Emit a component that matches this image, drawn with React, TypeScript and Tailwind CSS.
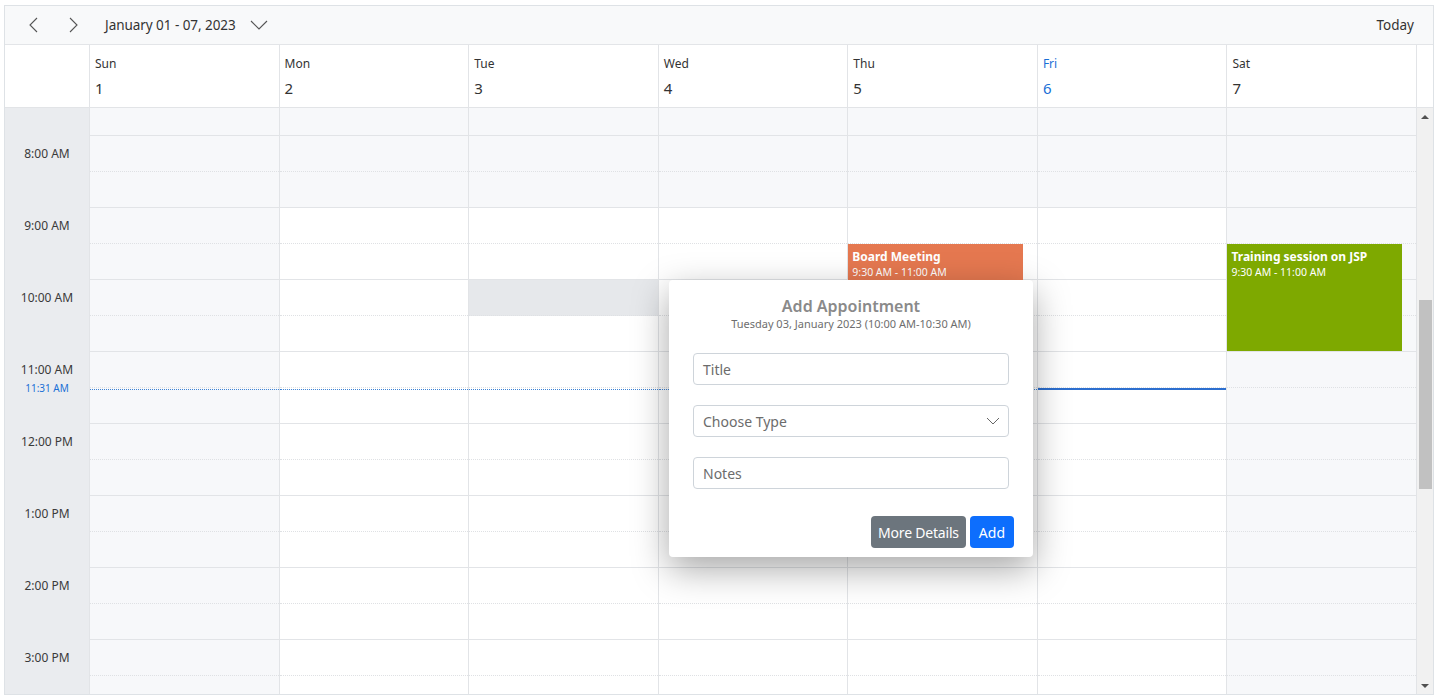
import React from "react";

const days = [
  { n: "Sun", d: "1" },
  { n: "Mon", d: "2" },
  { n: "Tue", d: "3" },
  { n: "Wed", d: "4" },
  { n: "Thu", d: "5" },
  { n: "Fri", d: "6", today: true },
  { n: "Sat", d: "7" },
];

const hours = [8, 9, 10, 11, 12, 13, 14, 15];
const label = (h: number) => {
  const ap = h >= 12 ? "PM" : "AM";
  const hh = h > 12 ? h - 12 : h;
  return `${hh}:00 ${ap}`;
};

function Slot({ day, hour, half, partial }: { day: number; hour: number; half: boolean; partial?: boolean }) {
  const working = day >= 1 && day <= 5 && hour >= 9 && hour < 18;
  const selected = day === 2 && hour === 10 && !half;
  const bg = selected ? "bg-[#e6e8eb]" : working ? "bg-white" : "bg-[#f7f8fa]";
  const border = half ? "border-b border-solid border-[#e2e4e7]" : "border-b border-dotted border-[#dfe1e4]";
  return <div className={`${partial ? "h-[28px]" : "h-[36px]"} shrink-0 ${bg} ${border}`} />;
}

function DayColumn({ day }: { day: number }) {
  return (
    <div className="relative flex-1 min-w-0 flex flex-col border-r border-[#e2e4e7]">
      <Slot day={day} hour={7} half partial />
      {hours.map((h) => (
        <React.Fragment key={h}>
          <Slot day={day} hour={h} half={false} />
          <Slot day={day} hour={h} half />
        </React.Fragment>
      ))}
      {day <= 4 && (
        <div className="absolute left-0 right-0 top-[281px] border-t border-dotted border-[#3b82d6]" />
      )}
      {day === 5 && <div className="absolute left-0 right-0 top-[280px] h-[2px] bg-[#2d6fcf]" />}
      {day === 4 && (
        <div className="absolute left-0 top-[136px] w-[175px] h-[107px] bg-[#e57850] px-[4px] pt-[5px] text-white">
          <div className="text-[12px] font-bold leading-[15px]">Board Meeting</div>
          <div className="text-[10.5px] leading-[15px] mt-[1px]">9:30 AM - 11:00 AM</div>
        </div>
      )}
      {day === 6 && (
        <div className="absolute left-0 top-[136px] w-[175px] h-[107px] bg-[#7ea900] px-[4px] pt-[5px] text-white">
          <div className="text-[12px] font-bold leading-[15px]">Training session on JSP</div>
          <div className="text-[10.5px] leading-[15px] mt-[1px]">9:30 AM - 11:00 AM</div>
        </div>
      )}
    </div>
  );
}

export default function App() {
  return (
    <div
      className="w-[1437px] h-[699px] bg-white pl-[4px] pt-[5px]"
      style={{ fontFamily: '"Segoe UI", "Noto Sans", "Open Sans", sans-serif' }}
    >
      <div className="relative w-[1430px] h-[690px] border border-[#dee2e6] flex flex-col overflow-hidden">
        {/* toolbar */}
        <div className="h-[39px] shrink-0 bg-[#f8f9fa] border-b border-[#e3e5e8] flex items-center text-[#333]">
          <div className="w-[19px]" />
          <svg width="20" height="20" viewBox="0 0 20 20" className="text-[#555]">
            <path d="M13 3 L6 10 L13 17" fill="none" stroke="currentColor" strokeWidth="1.1" />
          </svg>
          <div className="w-[19px]" />
          <svg width="20" height="20" viewBox="0 0 20 20" className="text-[#555]">
            <path d="M7 3 L14 10 L7 17" fill="none" stroke="currentColor" strokeWidth="1.1" />
          </svg>
          <span className="ml-[22px] text-[13.5px] text-[#333] tracking-[-0.05px]">January 01 - 07, 2023</span>
          <svg width="18" height="12" viewBox="0 0 18 12" className="ml-[14px] text-[#555]">
            <path d="M1 2 L9 10 L17 2" fill="none" stroke="currentColor" strokeWidth="1.1" />
          </svg>
          <div className="flex-1" />
          <span className="text-[13.5px] text-[#333] mr-[19px]">Today</span>
        </div>
        {/* header */}
        <div className="h-[63px] shrink-0 flex border-b border-[#e2e4e7] bg-white">
          <div className="w-[85px] shrink-0 border-r border-[#e2e4e7]" />
          <div className="flex-1 flex">
            {days.map((d) => (
              <div key={d.n} className="flex-1 min-w-0 border-r border-[#e2e4e7] pl-[5px] pt-[11px]">
                <div className={`text-[12px] leading-[16px] ${d.today ? "text-[#1a6fd6]" : "text-[#333]"}`}>{d.n}</div>
                <div className={`text-[15px] leading-[20px] mt-[6px] ${d.today ? "text-[#1a6fd6]" : "text-[#333]"}`}>{d.d}</div>
              </div>
            ))}
          </div>
          <div className="w-[16px] shrink-0" />
        </div>
        {/* body */}
        <div className="flex-1 flex min-h-0 overflow-hidden relative">
          <div className="relative w-[85px] shrink-0 bg-[#eaecef] border-r border-[#e2e4e7] flex flex-col">
            <div className="h-[28px] shrink-0" />
            {hours.map((h) => (
              <div key={h} className="h-[72px] shrink-0">
                <div className="h-[36px] flex items-center justify-center text-[12px] text-[#3a3a3a]">{label(h)}</div>
              </div>
            ))}
            <div className="absolute left-0 right-0 top-[274px] text-center text-[10px] leading-[12px] text-[#1a6fd6]">
              11:31 AM
            </div>
          </div>
          <div className="flex-1 flex min-w-0">
            {days.map((d, i) => (
              <DayColumn key={d.n} day={i} />
            ))}
          </div>
          {/* scrollbar */}
          <div className="w-[16px] shrink-0 bg-[#f1f1f1] flex flex-col items-center">
            <svg width="8" height="6" viewBox="0 0 8 6" className="mt-[6px]">
              <path d="M0 5 L4 1 L8 5 Z" fill="#505050" />
            </svg>
            <div className="mt-[180px] w-[13px] h-[189px] bg-[#c1c1c1]" />
            <div className="flex-1" />
            <svg width="8" height="6" viewBox="0 0 8 6" className="mb-[5px]">
              <path d="M0 1 L4 5 L8 1 Z" fill="#505050" />
            </svg>
          </div>

          {/* popup */}
          <div className="absolute left-[664px] top-[172px] w-[364px] h-[277px] bg-white rounded-[4px] shadow-[0_12px_36px_rgba(0,0,0,0.35)] flex flex-col">
            <div className="pt-[16px] text-center text-[16px] font-semibold leading-[20px] text-[#8a8a8a]">
              Add Appointment
            </div>
            <div className="text-center text-[11px] leading-[14px] text-[#6e6e6e] mt-[1px]">
              Tuesday 03, January 2023 (10:00 AM-10:30 AM)
            </div>
            <div className="px-[24px] mt-[22px] flex flex-col gap-[20px]">
              <div className="h-[32px] border border-[#ced4da] rounded-[4px] flex items-center pl-[9px] text-[14px] text-[#6c6c6c]">
                Title
              </div>
              <div className="h-[32px] border border-[#ced4da] rounded-[4px] flex items-center pl-[9px] pr-[8px] text-[14px] text-[#6c6c6c]">
                <span className="flex-1">Choose Type</span>
                <svg width="14" height="8" viewBox="0 0 14 8">
                  <path d="M1 1 L7 7 L13 1" fill="none" stroke="#666" strokeWidth="1" />
                </svg>
              </div>
              <div className="h-[32px] border border-[#ced4da] rounded-[4px] flex items-center pl-[9px] text-[14px] text-[#6c6c6c]">
                Notes
              </div>
            </div>
            <div className="flex-1" />
            <div className="flex justify-end gap-[4px] pr-[19px] pb-[9px]">
              <div className="h-[32px] px-[7px] bg-[#6c757d] rounded-[4px] text-white text-[14px] tracking-[-0.2px] flex items-center">
                More Details
              </div>
              <div className="h-[32px] px-[9px] bg-[#0d6efd] rounded-[4px] text-white text-[14px] flex items-center">
                Add
              </div>
            </div>
          </div>
        </div>
      </div>
    </div>
  );
}
